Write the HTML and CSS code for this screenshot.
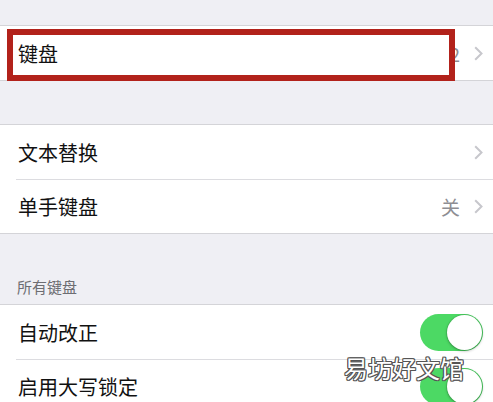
FILE: index.html
```html
<!DOCTYPE html>
<html lang="zh-CN">
<head>
    <meta charset="UTF-8">
    <meta name="viewport" content="width=device-width, initial-scale=1.0">
    <title>键盘</title>
    <link rel="stylesheet" href="styles.css">
</head>
<body>
    <!-- Keyboards -->
    <div class="group group-first">
        <div class="row">
            <span class="label">键盘</span>
            <span class="value">2</span>
            <svg class="chevron" width="9" height="15" viewBox="0 0 9 15"><path d="M1.2 1.2 L7.5 7.5 L1.2 13.8" fill="none" stroke="#c7c7cc" stroke-width="2"/></svg>
            <div class="highlight"></div>
        </div>
    </div>

    <!-- Text replacement / one-handed -->
    <div class="group">
        <div class="row">
            <span class="label">文本替换</span>
            <svg class="chevron" width="9" height="15" viewBox="0 0 9 15"><path d="M1.2 1.2 L7.5 7.5 L1.2 13.8" fill="none" stroke="#c7c7cc" stroke-width="2"/></svg>
        </div>
        <div class="row">
            <span class="label">单手键盘</span>
            <span class="value">关</span>
            <svg class="chevron" width="9" height="15" viewBox="0 0 9 15"><path d="M1.2 1.2 L7.5 7.5 L1.2 13.8" fill="none" stroke="#c7c7cc" stroke-width="2"/></svg>
        </div>
    </div>

    <div class="section-header">所有键盘</div>

    <!-- All keyboards -->
    <div class="group">
        <div class="row">
            <span class="label">自动改正</span>
            <div class="toggle on"><div class="knob"></div></div>
        </div>
        <div class="row">
            <span class="label">启用大写锁定</span>
            <div class="toggle on"><div class="knob"></div></div>
        </div>
    </div>

    <div class="watermark">易坊好文馆</div>
</body>
</html>
```

FILE: styles.css
```css
html, body {
    height: 402px;
    overflow: hidden;
}
body {
    margin: 0;
    position: relative;
    font-family: "Noto Sans CJK SC", "Noto Sans", sans-serif;
    background-color: #efeff4;
    color: #111;
}
.group {
    background: white;
    border-top: 1px solid #d4d4d8;
    border-bottom: 1px solid #d4d4d8;
}
.group-first {
    margin-top: 25px;
    margin-bottom: 43px;
}
.row {
    position: relative;
    display: flex;
    align-items: center;
    height: 54px;
    padding: 0 10px 0 18px;
    box-sizing: border-box;
}
.row + .row::before {
    content: "";
    position: absolute;
    top: 0;
    left: 16px;
    right: 0;
    border-top: 1px solid #dcdce0;
}
.label {
    flex: 1;
    font-size: 20px;
}
.value {
    font-size: 19px;
    color: #8e8e93;
    margin-right: 14px;
}
.chevron {
    display: block;
}
.section-header {
    height: 70px;
    display: flex;
    align-items: flex-end;
    padding: 0 0 7px 17px;
    box-sizing: border-box;
    font-size: 15px;
    line-height: 20px;
    color: #6d6d72;
}
.toggle {
    position: relative;
    width: 63px;
    height: 37px;
    border-radius: 19px;
    background-color: #4cd964;
}
.knob {
    position: absolute;
    top: 1px;
    right: 1px;
    width: 35px;
    height: 35px;
    border-radius: 50%;
    background: white;
    box-shadow: 0 0 0 1px rgba(0,0,0,0.08), 0 1px 3px rgba(0,0,0,0.3);
}
.highlight {
    position: absolute;
    top: 3px;
    left: 7px;
    width: 448px;
    height: 52px;
    border: 6px solid #b2221b;
    box-sizing: border-box;
}
.watermark {
    position: absolute;
    left: 344px;
    top: 351px;
    font-size: 24px;
    line-height: 34px;
    color: white;
    text-shadow: 1px 0 #555, -1px 0 #555, 0 1px #555, 0 -1px #555,
                 1px 1px #555, -1px -1px #555, 1px -1px #555, -1px 1px #555;
}
```
